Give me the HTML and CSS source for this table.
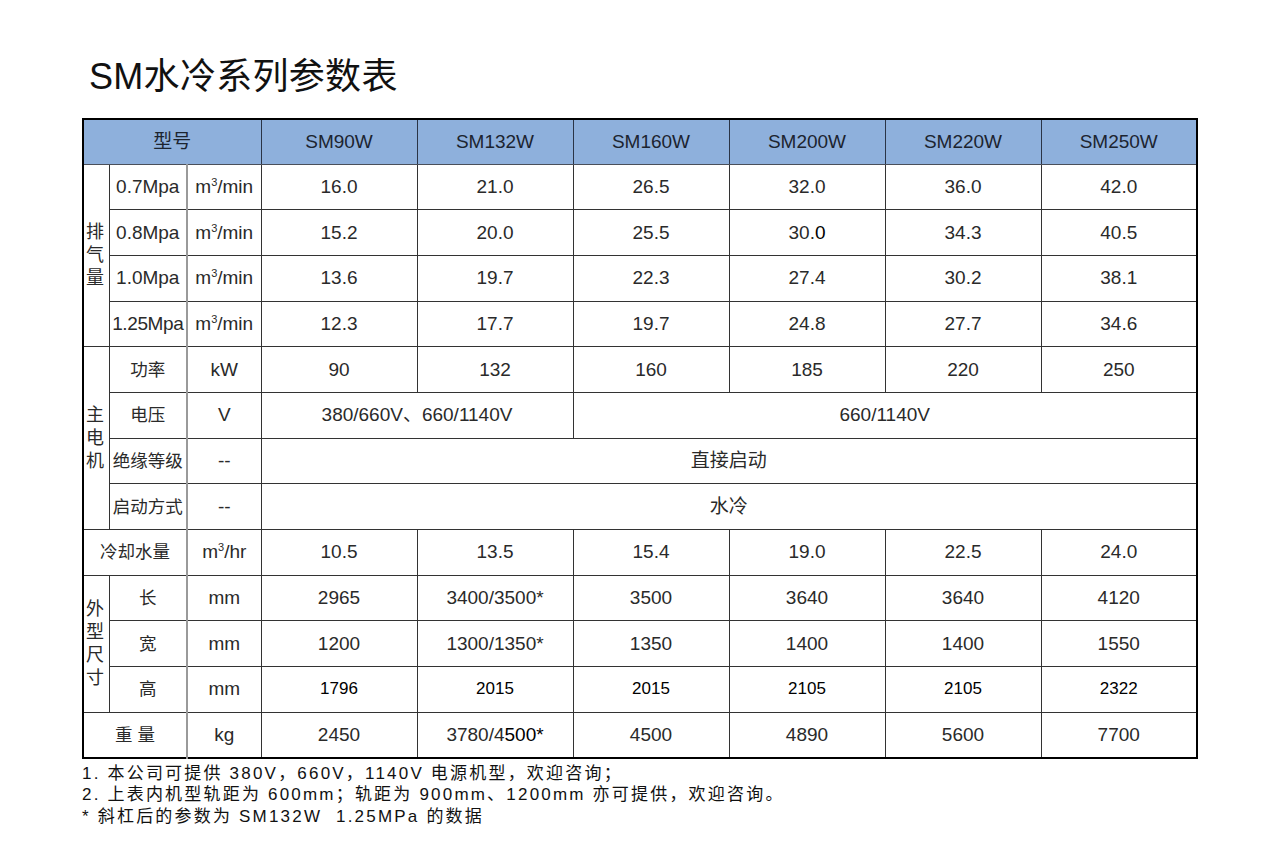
FILE: index.html
```html
<!DOCTYPE html>
<html lang="zh-CN">
<head>
<meta charset="utf-8">
<title>SM水冷系列参数表</title>
<link rel="stylesheet" href="styles.css">
</head>
<body>
<div class="page">
  <h1 class="title">SM水冷系列参数表</h1>
  <table class="spec">
    <colgroup>
      <col class="c-group"><col class="c-label"><col class="c-unit">
      <col class="c-val"><col class="c-val"><col class="c-val"><col class="c-val"><col class="c-val"><col class="c-val">
    </colgroup>
    <thead>
      <tr class="head">
        <th colspan="3" class="last-fixed">型号</th>
        <th>SM90W</th><th>SM132W</th><th>SM160W</th><th>SM200W</th><th>SM220W</th><th>SM250W</th>
      </tr>
    </thead>
    <tbody>
      <tr>
        <td rowspan="4" class="group">排<br>气<br>量</td>
        <td class="label num">0.7Mpa</td><td class="unit">m<sup>3</sup>/min</td>
        <td>16.0</td><td>21.0</td><td>26.5</td><td>32.0</td><td>36.0</td><td>42.0</td>
      </tr>
      <tr>
        <td class="label num">0.8Mpa</td><td class="unit">m<sup>3</sup>/min</td>
        <td>15.2</td><td>20.0</td><td>25.5</td><td>30.<span class="bold">0</span></td><td>34.3</td><td>40.5</td>
      </tr>
      <tr>
        <td class="label num">1.0Mpa</td><td class="unit">m<sup>3</sup>/min</td>
        <td>13.6</td><td>19.7</td><td>22.3</td><td>27.4</td><td>30.2</td><td>38.1</td>
      </tr>
      <tr>
        <td class="label num tight">1.25Mpa</td><td class="unit">m<sup>3</sup>/min</td>
        <td>12.3</td><td>17.7</td><td>19.7</td><td>24.8</td><td>27.7</td><td>34.6</td>
      </tr>
      <tr>
        <td rowspan="4" class="group">主<br>电<br>机</td>
        <td class="label">功率</td><td class="unit">kW</td>
        <td>90</td><td>132</td><td>160</td><td>185</td><td>220</td><td>250</td>
      </tr>
      <tr>
        <td class="label">电压</td><td class="unit">V</td>
        <td colspan="2">380/660V、660/1140V</td><td colspan="4">660/1140V</td>
      </tr>
      <tr>
        <td class="label">绝缘等级</td><td class="unit">--</td>
        <td colspan="6">直接启动</td>
      </tr>
      <tr>
        <td class="label">启动方式</td><td class="unit">--</td>
        <td colspan="6">水冷</td>
      </tr>
      <tr>
        <td colspan="2" class="label">冷却水量</td><td class="unit">m<sup>3</sup>/hr</td>
        <td>10.5</td><td>13.5</td><td>15.4</td><td>19.0</td><td>22.5</td><td>24.0</td>
      </tr>
      <tr>
        <td rowspan="3" class="group">外<br>型<br>尺<br>寸</td>
        <td class="label">长</td><td class="unit">mm</td>
        <td>2965</td><td>3400/3500*</td><td>3500</td><td>3640</td><td>3640</td><td>4120</td>
      </tr>
      <tr>
        <td class="label">宽</td><td class="unit">mm</td>
        <td>1200</td><td>1300/1350*</td><td>1350</td><td>1400</td><td>1400</td><td>1550</td>
      </tr>
      <tr class="alt-font">
        <td class="label">高</td><td class="unit">mm</td>
        <td>1796</td><td>2015</td><td>2015</td><td>2105</td><td>2105</td><td>2322</td>
      </tr>
      <tr>
        <td colspan="2" class="label">重 量</td><td class="unit">kg</td>
        <td>2450</td><td>3780/4<span class="bold">500*</span></td><td>4500</td><td>4890</td><td>5600</td><td>7700</td>
      </tr>
    </tbody>
  </table>
  <div class="notes">
    <p>1. 本公司可提供 380V，660V，1140V 电源机型，欢迎咨询；</p>
    <p>2. 上表内机型轨距为 600mm；轨距为 900mm、1200mm 亦可提供，欢迎咨询。</p>
    <p>* 斜杠后的参数为 SM132W&nbsp; 1.25MPa 的数据</p>
  </div>
</div>
</body>
</html>
```

FILE: styles.css
```css
html, body {
  margin: 0;
  padding: 0;
  background: #ffffff;
}

body {
  font-family: "Liberation Sans", "Noto Sans CJK SC", sans-serif;
  color: #2a2a2a;
}

.page {
  padding: 59px 0 0 82px;
}

.title {
  margin: 0 0 23px 7px;
  font-size: 36px;
  line-height: 36px;
  font-weight: 400;
  color: #111111;
  letter-spacing: 0.3px;
}

.spec {
  border-collapse: collapse;
  table-layout: fixed;
  width: 1116px;
  border: 2px solid #000000;
  font-size: 19px;
}

.c-group { width: 26px; }
.c-label { width: 78px; }
.c-unit { width: 74px; }
.c-val { width: 156px; }

.spec tr {
  height: 45.7px;
}

.spec th,
.spec td {
  border: 1px solid #333333;
  padding: 0;
  text-align: center;
  vertical-align: middle;
  font-weight: 400;
  white-space: nowrap;
  line-height: 22px;
}

.spec thead th {
  background: #8eb0dc;
  color: #1c2430;
  border-color: #2a3446;
  border-bottom-color: #4a4f5a;
}

.spec thead tr {
  height: 45px;
}

.spec td.group {
  text-align: left;
  padding-left: 2px;
  line-height: 23px;
  font-size: 18px;
}

.spec td.label {
  border-right: 2px solid #9a9a9a;
  font-size: 17.5px;
}

.spec td.label.num {
  font-size: 19px;
}

.spec td.label.tight {
  letter-spacing: -0.4px;
}

.spec td.unit {
  font-size: 19px;
}

.spec sup {
  font-size: 11px;
  line-height: 0;
  vertical-align: 7px;
}

.spec .alt-font td {
  color: #000000;
  font-size: 17px;
}

.spec .alt-font td.label {
  color: #2a2a2a;
  font-size: 17.5px;
}

.spec .alt-font td.unit {
  color: #2a2a2a;
  font-size: 19px;
}

.bold {
  color: #000000;
}

.notes {
  padding-top: 4px;
  font-size: 17px;
  line-height: 21.5px;
  color: #111111;
  letter-spacing: 2.2px;
}

.notes p {
  margin: 0;
}
```
